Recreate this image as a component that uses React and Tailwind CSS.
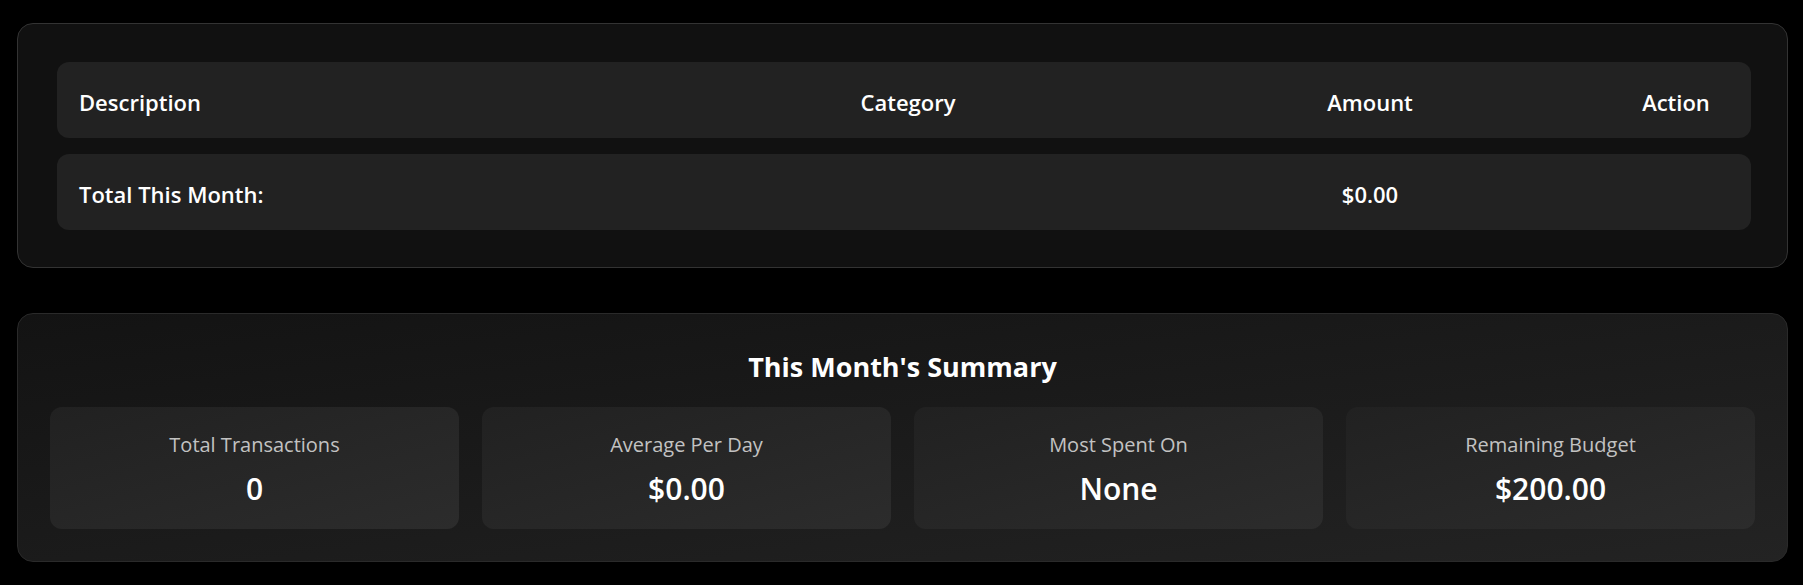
const stats = [
  { label: "Total Transactions", value: "0" },
  { label: "Average Per Day", value: "$0.00" },
  { label: "Most Spent On", value: "None" },
  { label: "Remaining Budget", value: "$200.00" },
]

export default function App() {
  return (
    <div className="min-h-screen bg-black pt-[23px] pl-[17px] pr-[15px] text-white [font-family:'Open_Sans',sans-serif]">
      <section className="rounded-2xl border border-[#333] bg-[#111] pt-[38px] pb-[37px] pl-[39px] pr-[36px]">
        <div className="flex flex-col gap-4">
          <div className="grid h-[76px] grid-cols-[621px_416px_508px_104px] items-center rounded-xl bg-[#222] px-[22px] pt-[4px] text-[22px] font-semibold">
            <span>Description</span>
            <span className="text-center">Category</span>
            <span className="text-center">Amount</span>
            <span className="text-center">Action</span>
          </div>
          <div className="grid h-[76px] grid-cols-[621px_416px_508px_104px] items-center rounded-xl bg-[#222] px-[22px] pt-[4px] text-[22px] font-semibold">
            <span>Total This Month:</span>
            <span />
            <span className="text-center">$0.00</span>
            <span />
          </div>
        </div>
      </section>

      <section className="mt-[45px] rounded-2xl border border-[#2a2a2a] bg-linear-to-br from-[#131313] to-[#232323] px-8 pt-[34px] pb-8">
        <h2 className="mb-[21px] text-center text-[27px] font-bold leading-[38px]">This Month's Summary</h2>
        <div className="grid grid-cols-4 gap-[23px]">
          {stats.map((s) => (
            <div
              key={s.label}
              className="flex h-[122px] flex-col items-center rounded-xl bg-linear-to-br from-[#212121] to-[#2c2c2c] pt-[24px]"
            >
              <p className="text-[20px] leading-[28px] text-[#c2c2c2]">{s.label}</p>
              <p className="mt-[10px] text-[30px] font-semibold leading-[40px]">{s.value}</p>
            </div>
          ))}
        </div>
      </section>
    </div>
  )
}
